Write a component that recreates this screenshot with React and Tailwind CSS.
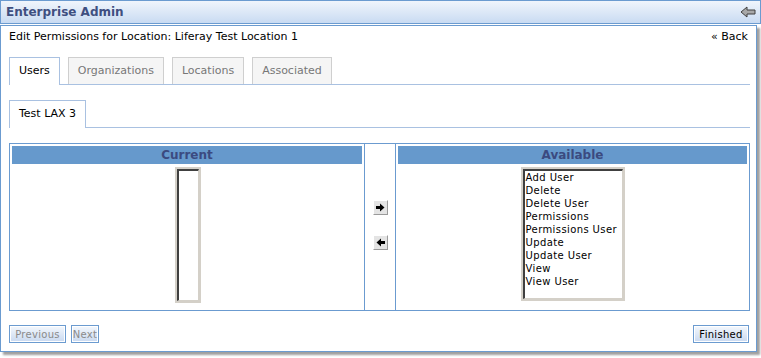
import React from 'react'

const available = ['Add User', 'Delete', 'Delete User', 'Permissions', 'Permissions User', 'Update', 'Update User', 'View', 'View User']

function Tab({ label, active }) {
    return (
        <div
            className={
                active
                    ? 'px-[9px] h-[28px] flex items-center border border-b-0 border-[#a9c1e1] bg-white text-black -mb-px relative'
                    : 'px-[9px] h-[27px] flex items-center border border-b-0 border-[#cfcfcf] bg-[#f5f5f5] text-[#777]'
            }
        >
            {label}
        </div>
    )
}

function ArrowBtn({ dir }) {
    return (
        <div className="w-[15px] h-[15px] bg-[#e4e4e4] border-r border-b border-[#9a9a9a] border-t border-l border-t-white border-l-white flex items-center justify-center">
            <svg width="9" height="9" viewBox="0 0 9 9">
                {dir === 'right'
                    ? <path d="M0 3h4V0.5L8.5 4.5 4 8.5V6H0z" fill="#000" />
                    : <path d="M9 3H5V0.5L0.5 4.5 5 8.5V6H9z" fill="#000" />}
            </svg>
        </div>
    )
}

function ListBox({ items, className }) {
    return (
        <div className={`border-2 border-[#d4d0c8] ${className}`}>
            <div className="h-full border-t-2 border-l-2 border-[#404040] border-r border-b border-r-[#d4d0c8] border-b-[#d4d0c8] bg-white pl-[1px]">
                {items.map((it) => (
                    <div key={it} className="h-[13px] leading-[13px] text-[10px] tracking-[0.4px] text-black">{it}</div>
                ))}
            </div>
        </div>
    )
}

export default function App() {
    return (
        <div className="w-[761px] h-[358px] bg-white font-['DejaVu_Sans',sans-serif] text-[11px] relative">
            <div className="h-[24px] border border-[#6b9bd0] bg-gradient-to-b from-[#f0f5fc] to-[#c9dbf2] flex items-center justify-between pl-[5px] pr-[4px]">
                <span className="font-bold text-[12px] text-[#3f4f80]">Enterprise Admin</span>
                <svg width="16" height="12" viewBox="0 0 16 12">
                    <path d="M1 6 7 1V4H15V8H7V11Z" fill="#a8a8a8" stroke="#404040" strokeWidth="1" />
                </svg>
            </div>
            <div className="mt-px w-[757px] h-[327px] border border-[#6b9bd0] shadow-[3px_3px_2px_#a0a0a0] px-[8px] pt-[2px] flex flex-col">
                <div className="flex justify-between h-[18px] items-center">
                    <span>Edit Permissions for Location: Liferay Test Location 1</span>
                    <span>« Back</span>
                </div>
                <div className="mt-[11px] flex gap-[8px] border-b border-[#a9c1e1] w-[741px]">
                    <Tab label="Users" active />
                    <Tab label="Organizations" />
                    <Tab label="Locations" />
                    <Tab label="Associated" />
                </div>
                <div className="mt-[15px] flex border-b border-[#a9c1e1] w-[741px]">
                    <Tab label="Test LAX 3" active />
                </div>
                <div className="mt-[15px] w-[741px] h-[168px] border border-[#6b9bd0] flex">
                    <div className="w-[354px] shrink-0 flex flex-col px-[2px] pt-[2px]">
                        <div className="h-[18px] bg-[#6699cc] text-[#3b4a80] font-bold text-[12px] text-center leading-[18px]">Current</div>
                        <div className="flex justify-center pt-[3px]">
                            <ListBox items={[]} className="w-[26px] h-[136px] ml-[1px]" />
                        </div>
                    </div>
                    <div className="w-[32px] shrink-0 border-l border-r border-[#6b9bd0] flex flex-col items-center pt-[56px] gap-[20px]">
                        <ArrowBtn dir="right" />
                        <ArrowBtn dir="left" />
                    </div>
                    <div className="flex-1 flex flex-col px-[2px] pt-[2px]">
                        <div className="h-[18px] bg-[#6699cc] text-[#3b4a80] font-bold text-[12px] text-center leading-[18px]">Available</div>
                        <div className="flex justify-center pt-[3px]">
                            <ListBox items={available} className="w-[104px] h-[134px]" />
                        </div>
                    </div>
                </div>
                <div className="mt-[14px] flex justify-between text-[10px] tracking-[0.3px]">
                    <div className="flex gap-[5px]">
                        <div className="w-[57px] h-[18px] justify-center border border-[#6b9bd0] bg-gradient-to-b from-[#f4f8fd] to-[#c9d9f0] text-[#8a8a8a] flex items-center shadow-[inset_0_0_0_1px_#fff]">Previous</div>
                        <div className="w-[28px] h-[18px] justify-center border border-[#6b9bd0] bg-gradient-to-b from-[#f4f8fd] to-[#c9d9f0] text-[#8a8a8a] flex items-center shadow-[inset_0_0_0_1px_#fff]">Next</div>
                    </div>
                    <div className="w-[56px] h-[18px] justify-center mr-[-1px] border border-[#6b9bd0] bg-gradient-to-b from-[#f4f8fd] to-[#c9d9f0] text-black flex items-center shadow-[inset_0_0_0_1px_#fff]">Finished</div>
                </div>
            </div>
        </div>
    )
}
